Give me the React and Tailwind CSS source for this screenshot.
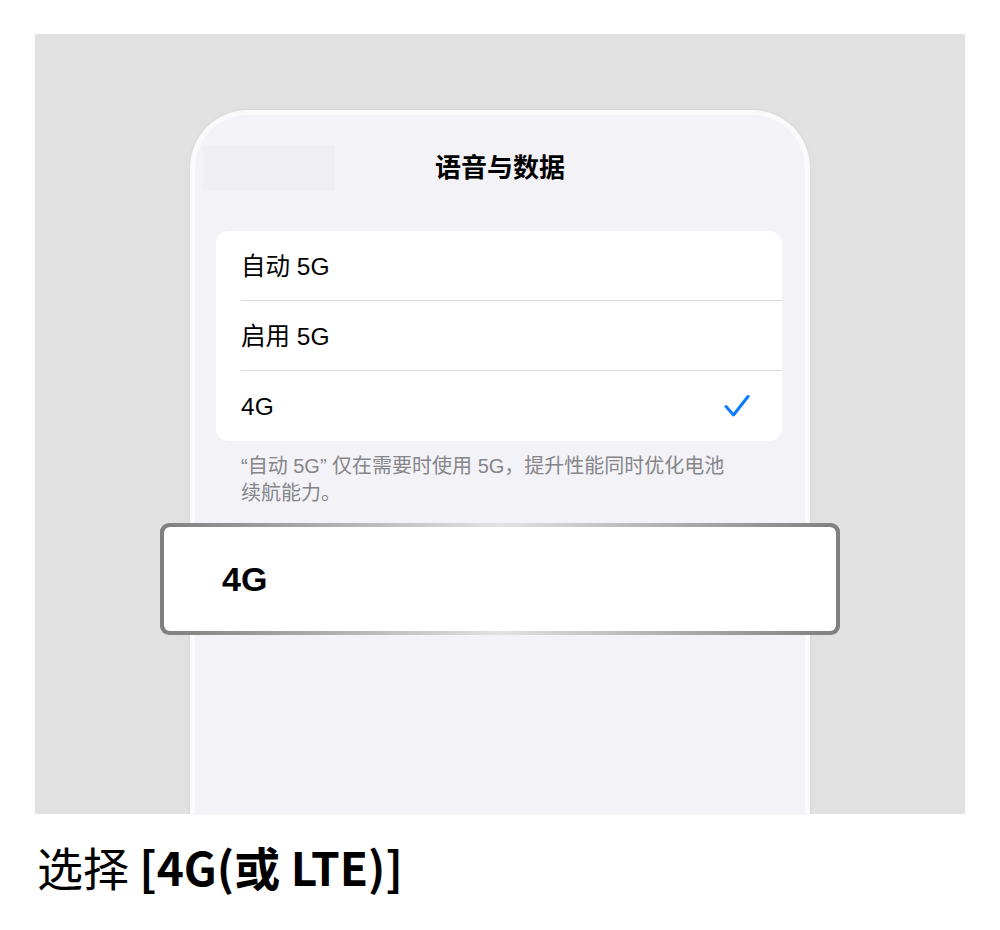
import React from "react";

const cjk = "font-['Noto_Sans_CJK_SC','Noto_Sans',sans-serif]";
const ui = "font-['Liberation_Sans','Noto_Sans_CJK_SC',sans-serif]";

function CheckIcon() {
  return (
    <svg width="26" height="24" viewBox="0 0 26 24" fill="none">
      <path d="M2 12.5 L9.5 21 L24 2.5" stroke="#0a7aff" strokeWidth="3" strokeLinecap="round" strokeLinejoin="round" />
    </svg>
  );
}

function Row({ label, checked, last }) {
  return (
    <div className="h-[70px] pl-[25px] flex">
      <div className={`flex-1 flex items-center justify-between pr-[32px] ${last ? "" : "border-b border-[#d9d9dd]"}`}>
        <span className="text-[24.5px] text-black pt-[3px]">{label}</span>
        {checked && <CheckIcon />}
      </div>
    </div>
  );
}

export default function App() {
  return (
    <div className={`w-[1000px] h-[930px] bg-white ${cjk}`}>
      <div className="mx-[35px] pt-[34px]">
        <div className="h-[780px] bg-[#e1e1e1] flex flex-col items-center pt-[76px]">
          {/* phone */}
          <div className={`w-[620px] flex-1 rounded-t-[58px] border-[5px] border-b-0 border-[#fafafa] bg-[#f2f2f7] shadow-[0_0_3px_rgba(0,0,0,0.08)] flex flex-col ${ui}`}>
            <div className="pt-[30px] pl-[8px] h-[76px] relative flex items-start">
              <div className="w-[132px] h-[46px] bg-[#efeff2]" />
              <div className="absolute left-0 right-0 top-[30px] h-[46px] flex items-center justify-center">
                <span className="text-[26px] font-bold text-black">语音与数据</span>
              </div>
            </div>

            <div className="mt-[40px] ml-[21px] mr-[23px] bg-white rounded-[13px] overflow-hidden">
              <Row label="自动 5G" />
              <Row label="启用 5G" />
              <Row label="4G" checked last />
            </div>

            <p className="mt-[12px] pl-[46px] pr-[30px] text-[20px] leading-[27px] text-[#86868a]">
              “自动 5G” 仅在需要时使用 5G，提升性能同时优化电池
              <br />
              续航能力。
            </p>

            {/* callout */}
            <div className="mt-[16px] mx-[-35px] h-[112px] rounded-[9px] p-[4px] bg-linear-to-r from-[#7f7f7f] via-[#e2e2e2] to-[#7f7f7f]">
              <div className="h-full bg-white rounded-[6px] flex items-center pl-[58px]">
                <span className="text-[34px] font-bold text-black">4G</span>
              </div>
            </div>
          </div>
        </div>
      </div>

      <div className="pl-[37px] pt-[20px] text-[46px] leading-[64px] text-black">
        选择 <span className="font-bold">[4G(或 LTE)]</span>
      </div>
    </div>
  );
}
